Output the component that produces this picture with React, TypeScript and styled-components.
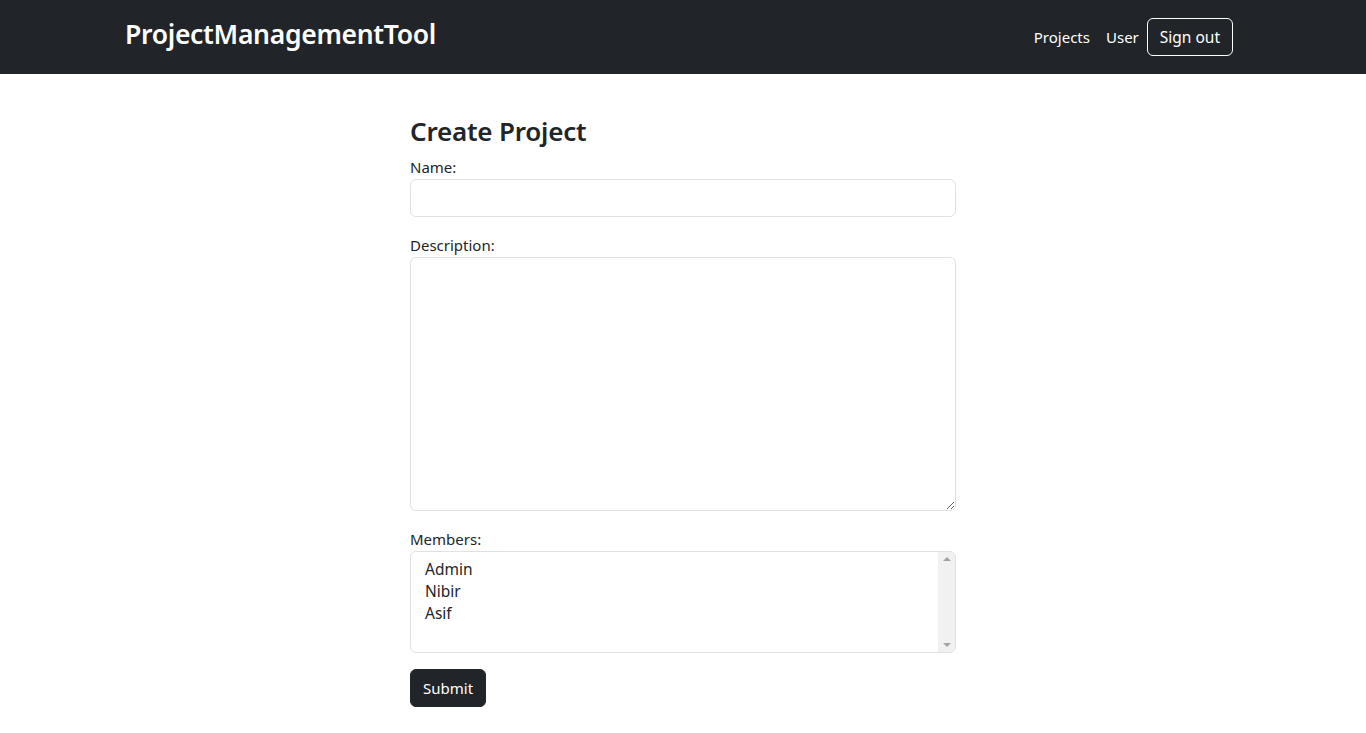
import styled, { createGlobalStyle } from "styled-components";

const GlobalStyle = createGlobalStyle`
  * { box-sizing: border-box; }
  body {
    margin: 0;
    font-family: "Noto Sans", "Liberation Sans", sans-serif;
    font-size: 16px;
    line-height: 1.5;
    color: #212529;
    background: #ffffff;
  }
`;

const Navbar = styled.nav`
  background: #212529;
  height: 74px;
`;

const NavInner = styled.div`
  max-width: 1140px;
  height: 100%;
  margin: 0 auto;
  padding: 0 12px;
  display: flex;
  align-items: center;
  justify-content: space-between;
`;

const Brand = styled.a`
  color: #ffffff;
  font-size: 26.5px;
  font-weight: 600;
  letter-spacing: -0.3px;
  text-decoration: none;
  margin-bottom: 4px;
`;

const NavList = styled.ul`
  list-style: none;
  margin: 0 8px 0 0;
  padding: 0;
  display: flex;
  align-items: center;
`;

const NavLink = styled.a`
  display: block;
  padding: 8px 7px 8px 9px;
  color: #ffffff;
  font-size: 15px;
  text-decoration: none;
`;

const OutlineButton = styled.button`
  font-family: inherit;
  font-size: 15.5px;
  line-height: 1.5;
  color: #ffffff;
  background: transparent;
  border: 1px solid #ffffff;
  border-radius: 6px;
  padding: 7px 12px 5px;
  margin-left: 1px;
  height: 38px;
`;

const Container = styled.main`
  max-width: 1140px;
  margin: 0 auto;
  padding: 42px 0 24px;
  display: grid;
  grid-template-columns: repeat(4, 1fr);
`;

const FormColumn = styled.form`
  grid-column: 2 / 4;
  padding: 0 12px;
`;

const Title = styled.h3`
  margin: 0 0 8px;
  font-size: 26px;
  font-weight: 600;
  letter-spacing: -0.2px;
  line-height: 1.2;
`;

const Field = styled.div`
  margin-bottom: 16px;
`;

const Label = styled.label`
  display: block;
  font-size: 15px;
  line-height: 24px;
`;

const inputBase = `
  display: block;
  width: 100%;
  font-family: inherit;
  font-size: 16px;
  color: #212529;
  background: #ffffff;
  border: 1px solid #dee2e6;
  border-radius: 6px;
  padding: 6px 12px;
`;

const TextInput = styled.input`
  ${inputBase}
  height: 38px;
`;

const TextArea = styled.textarea`
  ${inputBase}
  height: 254px;
  resize: vertical;
`;

const ListBox = styled.div`
  display: flex;
  height: 102px;
  border: 1px solid #dee2e6;
  border-radius: 6px;
  overflow: hidden;
`;

const Options = styled.div`
  flex: 1;
  padding: 6px 12px;
`;

const Option = styled.div`
  padding: 0 2px;
  font-size: 15.5px;
  line-height: 22px;
`;

const Track = styled.div`
  width: 17px;
  background: #f1f1f1;
  display: flex;
  flex-direction: column;
  justify-content: space-between;
  align-items: center;
  padding: 5px 0;
`;

const Arrow = styled.span<{ $down?: boolean }>`
  width: 0;
  height: 0;
  border-left: 4px solid transparent;
  border-right: 4px solid transparent;
  ${p => (p.$down ? `border-top: 4px solid #a3a3a3;` : `border-bottom: 4px solid #a3a3a3;`)}
`;

const SubmitButton = styled.button`
  font-family: inherit;
  font-size: 15px;
  line-height: 1.5;
  color: #ffffff;
  background: #212529;
  border: 1px solid #212529;
  border-radius: 6px;
  padding: 6px 12px;
  height: 38px;
`;

const members = ["Admin", "Nibir", "Asif"];

export default function App() {
  return (
    <>
      <GlobalStyle />
      <Navbar>
        <NavInner>
          <Brand href="#">ProjectManagementTool</Brand>
          <NavList>
            <li><NavLink href="#">Projects</NavLink></li>
            <li><NavLink href="#">User</NavLink></li>
            <li><OutlineButton type="button">Sign out</OutlineButton></li>
          </NavList>
        </NavInner>
      </Navbar>
      <Container>
        <FormColumn onSubmit={e => e.preventDefault()}>
          <Title>Create Project</Title>
          <Field>
            <Label htmlFor="name">Name:</Label>
            <TextInput id="name" type="text" />
          </Field>
          <Field>
            <Label htmlFor="description">Description:</Label>
            <TextArea id="description" />
          </Field>
          <Field>
            <Label>Members:</Label>
            <ListBox role="listbox" aria-multiselectable="true">
              <Options>
                {members.map(m => (
                  <Option key={m} role="option">{m}</Option>
                ))}
              </Options>
              <Track>
                <Arrow />
                <Arrow $down />
              </Track>
            </ListBox>
          </Field>
          <SubmitButton type="submit">Submit</SubmitButton>
        </FormColumn>
      </Container>
    </>
  );
}
